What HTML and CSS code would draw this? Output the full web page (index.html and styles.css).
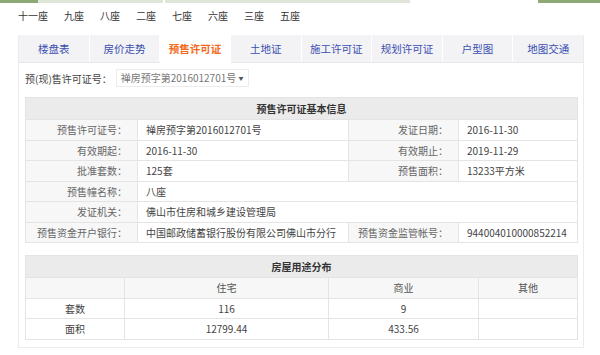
FILE: index.html
```html
<!DOCTYPE html>
<html lang="zh-CN">
<head>
    <meta charset="UTF-8">
    <meta name="viewport" content="width=device-width, initial-scale=1.0">
    <title>预售许可证</title>
    <link rel="stylesheet" href="styles.css">
</head>
<body>

    <div class="strip">
        <span class="seg seg-green"></span>
        <span class="seg seg-pale seg-a"></span>
        <span class="seg seg-gap"></span>
        <span class="seg seg-pale seg-b"></span>
        <span class="seg seg-fill"></span>
        <span class="seg seg-green seg-c"></span>
    </div>

    <div class="buildings">
        <a>十一座</a>
        <a>九座</a>
        <a>八座</a>
        <a>二座</a>
        <a>七座</a>
        <a>六座</a>
        <a>三座</a>
        <a>五座</a>
    </div>

    <div class="box">
        <div class="tabs">
            <a class="tab">楼盘表</a>
            <a class="tab">房价走势</a>
            <a class="tab active">预售许可证</a>
            <a class="tab">土地证</a>
            <a class="tab">施工许可证</a>
            <a class="tab">规划许可证</a>
            <a class="tab">户型图</a>
            <a class="tab">地图交通</a>
        </div>

        <div class="panel">
            <div class="picker">
                <span class="picker-label">预(现)售许可证号：</span>
                <span class="select">禅房预字第2016012701号 <i class="caret">▼</i></span>
            </div>

            <table class="info">
                <colgroup>
                    <col class="c1"><col class="c2"><col class="c3"><col class="c4">
                </colgroup>
                <tr><th colspan="4">预售许可证基本信息</th></tr>
                <tr>
                    <td class="lbl">预售许可证号：</td>
                    <td>禅房预字第2016012701号</td>
                    <td class="lbl">发证日期：</td>
                    <td>2016-11-30</td>
                </tr>
                <tr>
                    <td class="lbl">有效期起：</td>
                    <td>2016-11-30</td>
                    <td class="lbl">有效期止：</td>
                    <td>2019-11-29</td>
                </tr>
                <tr>
                    <td class="lbl">批准套数：</td>
                    <td>125套</td>
                    <td class="lbl">预售面积：</td>
                    <td>13233平方米</td>
                </tr>
                <tr>
                    <td class="lbl">预售幢名称：</td>
                    <td colspan="3">八座</td>
                </tr>
                <tr>
                    <td class="lbl">发证机关：</td>
                    <td colspan="3">佛山市住房和城乡建设管理局</td>
                </tr>
                <tr>
                    <td class="lbl">预售资金开户银行：</td>
                    <td>中国邮政储蓄银行股份有限公司佛山市分行</td>
                    <td class="lbl">预售资金监管帐号：</td>
                    <td>944004010000852214</td>
                </tr>
            </table>

            <table class="usage">
                <colgroup>
                    <col class="u1"><col class="u2"><col class="u3"><col class="u4">
                </colgroup>
                <tr><th colspan="4">房屋用途分布</th></tr>
                <tr class="sub">
                    <td></td>
                    <td>住宅</td>
                    <td>商业</td>
                    <td>其他</td>
                </tr>
                <tr>
                    <td>套数</td>
                    <td>116</td>
                    <td>9</td>
                    <td></td>
                </tr>
                <tr>
                    <td>面积</td>
                    <td>12799.44</td>
                    <td>433.56</td>
                    <td></td>
                </tr>
            </table>
        </div>
    </div>

</body>
</html>
```

FILE: styles.css
```css
body {
    margin: 0;
    font-family: "Noto Sans CJK SC", "Open Sans", sans-serif;
    font-size: 10px;
    color: #333;
    background-color: #fff;
}
.strip {
    display: flex;
    height: 3px;
}
.seg {
    display: block;
    height: 100%;
}
.seg-green {
    width: 38px;
    background-color: #8daa74;
}
.seg-pale {
    background-color: #dfe6d8;
}
.seg-a {
    width: 125px;
}
.seg-gap {
    width: 2px;
}
.seg-b {
    width: 245px;
}
.seg-fill {
    flex: 1;
}
.seg-c {
    width: 62px;
}
.buildings {
    display: flex;
    padding: 5px 0 0 18px;
    box-sizing: border-box;
    height: 32px;
}
.buildings a {
    margin-right: 16px;
    color: #333;
}
.box {
    width: 564px;
    margin-left: 18px;
    border: 1px solid #ececec;
    border-top: none;
}
.tabs {
    display: flex;
    height: 27px;
    border-bottom: 1px solid #e8e8e8;
}
.tab {
    flex: 1;
    text-align: center;
    line-height: 27px;
    font-size: 10.5px;
    color: #3b4fb0;
    background-color: #f3f3f5;
    border-right: 1px solid #fff;
}
.tab:last-child {
    border-right: none;
}
.tab.active {
    color: #f26b1d;
    font-weight: bold;
    background-color: #fff;
    margin-bottom: -1px;
}
.panel {
    padding: 6px 6px 7px;
}
.picker {
    display: flex;
    align-items: center;
    height: 18px;
    margin-bottom: 10px;
}
.picker-label {
    color: #444;
}
.select {
    margin-left: 4px;
    padding: 0 4px;
    height: 16px;
    line-height: 16px;
    border: 1px solid #ececec;
    color: #777;
}
.caret {
    font-style: normal;
    font-size: 5px;
    vertical-align: 2px;
    color: #555;
}
table {
    width: 552px;
    border-collapse: collapse;
    table-layout: fixed;
}
table th, table td {
    border: 1px solid #e4e4e4;
    height: 19.5px;
    padding: 0 8px;
    white-space: nowrap;
    overflow: hidden;
}
table th {
    height: 21px;
    background-color: #ebebeb;
    font-weight: bold;
    color: #333;
}
.info td {
    color: #444;
}
.info td.lbl {
    background-color: #f7f7f7;
    color: #666;
    text-align: right;
    padding-right: 10px;
}
.c1 { width: 112px; }
.c2 { width: 211px; }
.c3 { width: 110px; }
.c4 { width: 119px; }
.usage {
    margin-top: 12px;
}
.usage td {
    text-align: center;
    color: #444;
}
.usage .sub td {
    background-color: #f7f7f7;
    color: #555;
}
.u1 { width: 99px; }
.u2 { width: 204px; }
.u3 { width: 150px; }
.u4 { width: 99px; }
```
